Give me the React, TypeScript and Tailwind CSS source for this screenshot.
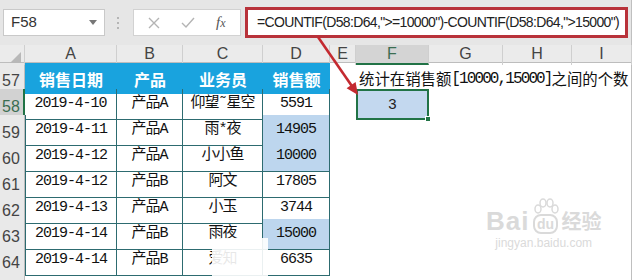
import React from "react";

const COLS =
  "grid grid-cols-[25px_92px_66px_80px_67px_26px_73px_74px_69px_60px]";

const CELL_FONT =
  "font-['Liberation_Mono','Noto_Sans_CJK_SC',monospace] text-[15px] tracking-[-1px] text-[#111]";

type DataRow = {
  n: number;
  date: string;
  product: string;
  person: string;
  amount: string;
  hl?: boolean;
};

const rows: DataRow[] = [
  { n: 58, date: "2019-4-10", product: "产品A", person: "仰望˜星空", amount: "5591" },
  { n: 59, date: "2019-4-11", product: "产品A", person: "雨*夜", amount: "14905", hl: true },
  { n: 60, date: "2019-4-12", product: "产品A", person: "小小鱼", amount: "10000", hl: true },
  { n: 61, date: "2019-4-12", product: "产品B", person: "阿文", amount: "17805" },
  { n: 62, date: "2019-4-13", product: "产品A", person: "小玉", amount: "3744" },
  { n: 63, date: "2019-4-14", product: "产品B", person: "雨夜", amount: "15000", hl: true },
  { n: 64, date: "2019-4-14", product: "产品B", person: "爱知", amount: "6635" },
];

// split text so latin runs get squeezed to half-width like SimSun
function Mixed({ text }: { text: string }) {
  return (
    <>
      {text.split(/([\x00-\x7f]+)/).map((part, i) =>
        /[\x00-\x7f]/.test(part) ? (
          <span
            key={i}
            className="font-['Liberation_Mono',monospace] text-[16px] tracking-[-1.9px]"
          >
            {part}
          </span>
        ) : (
          <span key={i}>{part}</span>
        )
      )}
    </>
  );
}

function RowHead({ n, active }: { n?: number; active?: boolean }) {
  return (
    <div
      className={`flex h-full items-center pl-[2px] pt-[6px] font-['Liberation_Sans',sans-serif] text-[16px] ${
        active
          ? "border-r-2 border-r-[#217346] bg-[#d2d2d2] text-[#3b6e52]"
          : "border-r border-r-[#bdbdbd] bg-[#e9e9e9] text-[#444]"
      } border-b border-b-[#d6d6d6]`}
    >
      {n}
    </div>
  );
}

export default function App() {
  return (
    <div className="relative h-[280px] w-[636px] overflow-hidden bg-white">
      <div className="w-[632px] border-r border-r-[#bfbfbf]">
        {/* Formula bar */}
        <div className="flex h-[45px] items-center bg-[#e6e6e6] pl-[3px]">
          <div className="flex h-[27px] w-[102px] items-center justify-between border border-[#c9c9c9] bg-white pl-[7px] pr-[7px] font-['Liberation_Sans',sans-serif] text-[15px] text-[#333]">
            <span>F58</span>
            <span className="h-0 w-0 border-x-[4px] border-t-[5px] border-x-transparent border-t-[#777]" />
          </div>

          <div className="ml-[12px] flex flex-col gap-[3px]">
            <span className="h-[2px] w-[2px] bg-[#b5b5b5]" />
            <span className="h-[2px] w-[2px] bg-[#b5b5b5]" />
            <span className="h-[2px] w-[2px] bg-[#b5b5b5]" />
          </div>

          <div className="ml-[14px] flex h-[27px] w-[108px] items-center justify-around border border-[#d2d2d2] bg-white px-[4px]">
            <svg width="12" height="12" viewBox="0 0 12 12">
              <path d="M1 1 L11 11 M11 1 L1 11" stroke="#b4b4b4" strokeWidth="1.4" />
            </svg>
            <svg width="14" height="12" viewBox="0 0 14 12">
              <path d="M1 6 L5 10 L13 1" stroke="#b4b4b4" strokeWidth="1.4" fill="none" />
            </svg>
            <span className="font-['Liberation_Serif',serif] text-[15px] italic text-[#555]">
              f<span className="text-[12px]">x</span>
            </span>
          </div>

          <div className="ml-[4px] flex h-[31px] w-[383px] items-center overflow-hidden whitespace-nowrap border-[3px] border-[#b8323a] bg-white pl-[9px] font-['Liberation_Sans',sans-serif] text-[14px] tracking-[-0.65px] text-[#222]">
            =COUNTIF(D58:D64,"&gt;=10000")-COUNTIF(D58:D64,"&gt;15000")
          </div>
        </div>

        {/* Column headers */}
        <div
          className={`${COLS} h-[18px] border-b border-b-[#bdbdbd] bg-[#ebebeb] font-['Liberation_Sans',sans-serif] text-[16px] leading-[18px] text-[#444]`}
        >
          <div className="relative border-r border-r-[#cfcfcf]">
            <span className="absolute bottom-[2px] right-[3px] h-0 w-0 border-b-[11px] border-l-[11px] border-b-[#b8b8b8] border-l-transparent" />
          </div>
          {["A", "B", "C", "D", "E"].map((c) => (
            <div key={c} className="border-r border-r-[#cfcfcf] text-center">
              {c}
            </div>
          ))}
          <div className="border-b-2 border-r border-b-[#217346] border-r-[#cfcfcf] bg-[#d4d4d4] text-center text-[#3b6e52]">
            F
          </div>
          {["G", "H", "I"].map((c) => (
            <div key={c} className="border-r border-r-[#cfcfcf] text-center">
              {c}
            </div>
          ))}
        </div>

        {/* Row 57: table header + caption */}
        <div className={`${COLS} h-[26px]`}>
          <RowHead n={57} />
          {["销售日期", "产品", "业务员", "销售额"].map((h) => (
            <div
              key={h}
              className="flex items-center justify-center bg-[#19a3de] font-['Noto_Sans_CJK_SC',sans-serif] text-[16px] font-bold text-white"
            >
              {h}
            </div>
          ))}
          <div />
          <div className="col-span-4 flex items-center whitespace-nowrap pl-[3px] font-['Noto_Sans_CJK_SC',sans-serif] text-[15.4px] text-[#111]">
            <Mixed text="统计在销售额[10000,15000]之间的个数" />
          </div>
        </div>

        {/* Data rows */}
        {rows.map((r) => (
          <div key={r.n} className={`${COLS} h-[26px]`}>
            <RowHead n={r.n} active={r.n === 58} />
            <div
              className={`flex items-center justify-center border-b border-r border-[#2d6b70] ${
                r.n === 58 ? "" : "border-l border-l-[#2d6b70]"
              } ${CELL_FONT}`}
            >
              {r.date}
            </div>
            <div className={`flex items-center justify-center border-b border-r border-[#2d6b70] ${CELL_FONT}`}>
              {r.product}
            </div>
            <div className={`flex items-center justify-center border-b border-r border-[#2d6b70] ${CELL_FONT}`}>
              {r.person}
            </div>
            <div
              className={`flex items-center justify-center border-b border-r border-[#2d6b70] ${
                r.hl ? "bg-[#bdd6ee]" : ""
              } ${CELL_FONT}`}
            >
              {r.amount}
            </div>
            <div />
            {r.n === 58 ? (
              <div className="relative flex items-center justify-center border-2 border-[#217346] bg-[#c3d8ef] font-['Liberation_Sans',sans-serif] text-[15px] text-[#222]">
                3
                <span className="absolute -bottom-[4px] -right-[4px] h-[6px] w-[6px] border border-white bg-[#217346]" />
              </div>
            ) : (
              <div />
            )}
            <div />
            <div />
            <div />
          </div>
        ))}

        {/* Row 65 (partial, number hidden below the fold) */}
        <div className={`${COLS} h-[26px]`}>
          <RowHead />
        </div>
      </div>

      {/* Watermark patch over C64 */}
      <div className="absolute left-[212px] top-[238px] h-[42px] w-[56px] rounded-tl-[6px] bg-white/90" />

      {/* Red arrow */}
      <svg
        className="pointer-events-none absolute left-0 top-0"
        width="636"
        height="280"
        viewBox="0 0 636 280"
      >
        <path d="M318 37 L351.5 85.5" stroke="#c42a30" strokeWidth="2.6" />
        <polygon points="358,95 346.6,88.2 355.6,82" fill="#c42a30" />
      </svg>

      {/* Baidu watermark */}
      <div className="pointer-events-none absolute left-[486px] top-[208px] flex flex-col items-center text-[#dadada]">
        <div className="flex items-end">
          <span className="font-['Liberation_Sans',sans-serif] text-[26px] font-bold leading-[26px] tracking-[1px]">
            Bai
          </span>
          <div className="relative mx-[2px] flex h-[26px] w-[28px] items-end justify-center">
            <svg className="absolute left-[2px] top-[-10px]" width="26" height="20" viewBox="0 0 26 20">
              <ellipse cx="5" cy="11" rx="3" ry="4" fill="none" stroke="#dadada" strokeWidth="1.5" />
              <ellipse cx="10" cy="5" rx="3" ry="4" fill="none" stroke="#dadada" strokeWidth="1.5" />
              <ellipse cx="17" cy="5" rx="3" ry="4" fill="none" stroke="#dadada" strokeWidth="1.5" />
              <ellipse cx="22" cy="11" rx="3" ry="4" fill="none" stroke="#dadada" strokeWidth="1.5" />
            </svg>
            <span className="rounded-[8px] border-2 border-[#dadada] px-[2px] font-['Liberation_Sans',sans-serif] text-[14px] font-bold leading-[16px]">
              du
            </span>
          </div>
          <span className="font-['Noto_Sans_CJK_SC',sans-serif] text-[20px] font-bold leading-[26px]">
            经验
          </span>
        </div>
        <span className="mt-[2px] font-['Liberation_Sans',sans-serif] text-[12px] leading-[14px]">
          jingyan.baidu.com
        </span>
      </div>
    </div>
  );
}
